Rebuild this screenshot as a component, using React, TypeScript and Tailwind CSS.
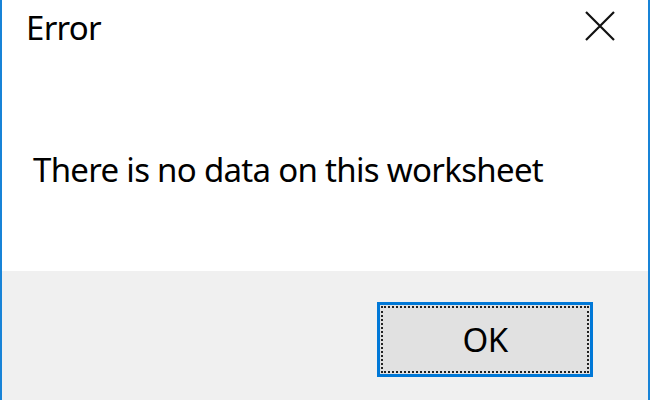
export default function App() {
  return (
    <div
      className="flex h-[400px] w-[650px] flex-col border-x-2 border-[#1883d7] bg-white text-black"
      style={{ fontFamily: '"Noto Sans", "Open Sans", sans-serif' }}
    >
      {/* title bar */}
      <div className="flex h-[56px] shrink-0 items-start justify-between">
        <div className="pl-[24px] pt-[4px] text-[33px] leading-[48px] tracking-[-0.7px]">Error</div>
        <button className="mr-[33px] mt-[11px] h-[30px] w-[30px]">
          <svg viewBox="0 0 30 30" className="h-[30px] w-[30px]">
            <path d="M1 1 L29 29 M29 1 L1 29" stroke="#111" strokeWidth="2.2" fill="none" />
          </svg>
        </button>
      </div>

      {/* message */}
      <div className="flex-1">
        <div className="pl-[31px] pt-[90px] text-[33px] leading-[48px] tracking-[-0.7px]">
          There is no data on this worksheet
        </div>
      </div>

      {/* footer */}
      <div className="flex h-[129px] shrink-0 justify-end bg-[#f0f0f0] pr-[55px] pt-[31px]">
        <button className="h-[75px] w-[216px] border-[3px] border-[#0078d7] bg-[#e1e1e1] p-px">
          <div className="flex h-full w-full items-center justify-center border-2 border-dotted border-[#222] text-[33px] leading-none tracking-[-0.5px]">
            OK
          </div>
        </button>
      </div>
    </div>
  );
}
